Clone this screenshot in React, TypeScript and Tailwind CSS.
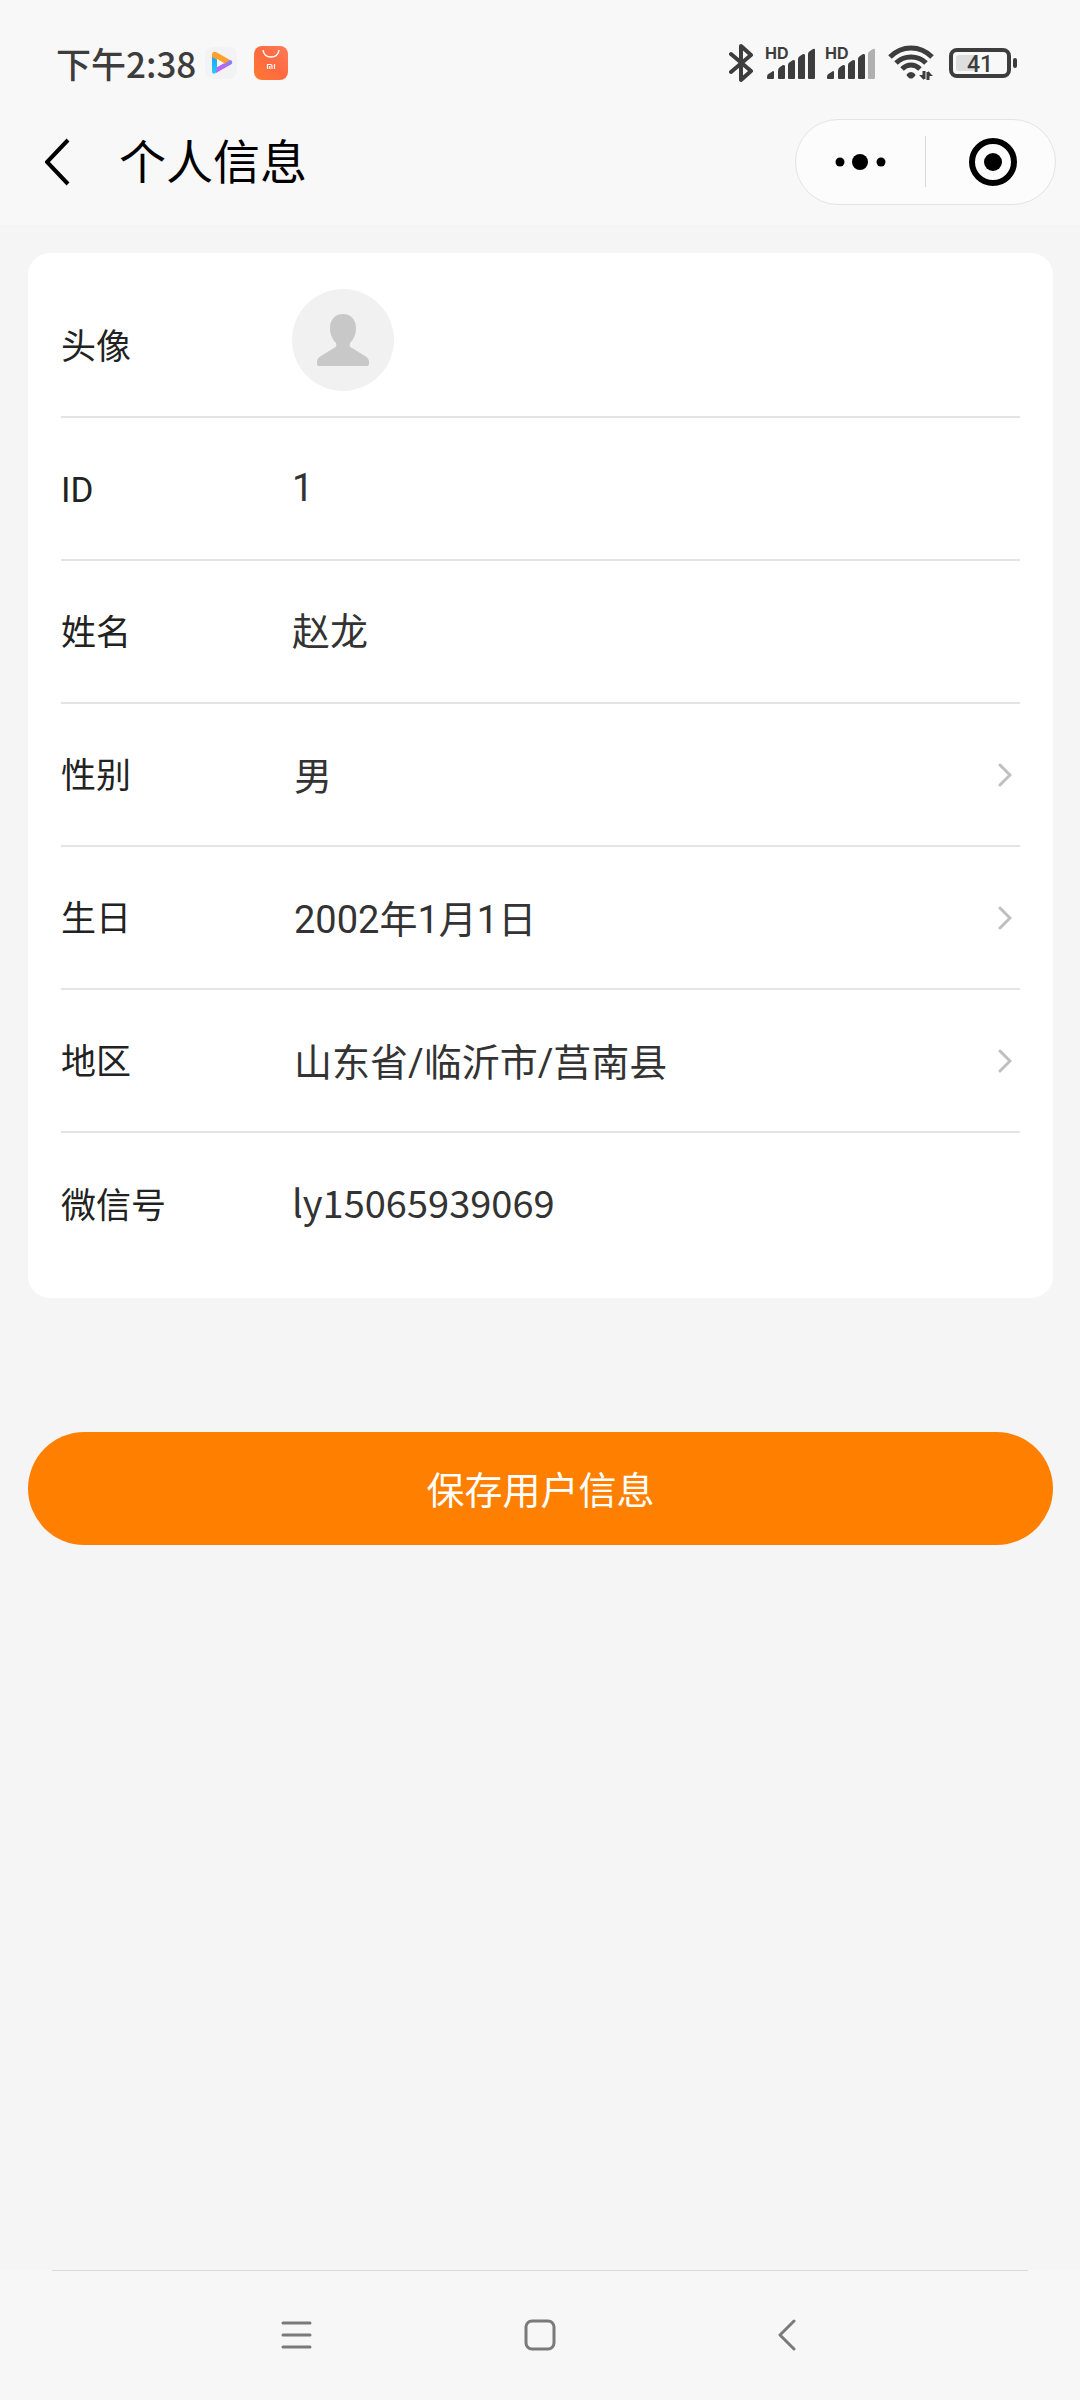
import { useState } from 'react';
import type { ReactNode } from 'react';

const regionText = '山东省/临沂市/莒南县';

function BluetoothIcon() {
    return (
        <svg width="26" height="40" viewBox="0 0 26 40" fill="none" stroke="#3d3d3d" strokeWidth="4" strokeLinecap="round" strokeLinejoin="round">
            <path d="M2 11 L22 28 L12 37 V3 L22 12 L2 29" />
        </svg>
    );
}

function SignalIcon({ weak }: { weak?: boolean }) {
    return (
        <svg width="51" height="42" viewBox="0 -4 51 42" fill="#3d3d3d">
            <text x="0" y="13" fontSize="16" fontWeight="700" fontFamily="Inter, sans-serif">HD</text>
            <path d="M3 33 Q2 33 2 32 V31 Q2 28 5 27 L8 25 Q9 25 9 26 V32 Q9 33 8 33 Z" />
            <path d="M13 25 Q13 22 15 21 L18 19 Q20 19 20 20 V32 Q20 33 19 33 H14 Q13 33 13 32 Z" />
            <path d="M23 19 Q23 17 25 16 L28 14 Q30 14 30 15 V32 Q30 33 29 33 H24 Q23 33 23 32 Z" />
            <path d="M33 13 Q33 11 35 10 L38 8 Q40 8 40 9 V32 Q40 33 39 33 H34 Q33 33 33 32 Z" />
            <path
                d="M43 8 Q43 6 45 5 L48 3 Q50 2 50 4 V32 Q50 33 49 33 H44 Q43 33 43 32 Z"
                fill={weak ? '#b0b0b0' : '#3d3d3d'}
            />
        </svg>
    );
}

function WifiIcon() {
    return (
        <svg width="46" height="36" viewBox="0 0 46 36" fill="none" stroke="#3d3d3d" strokeWidth="5">
            <path d="M2 12 Q11 3 23 3 Q35 3 44 12" />
            <path d="M8 18 Q14 12 23 12 Q32 12 38 18" />
            <path d="M14 24 Q18 20 23 20 Q28 20 32 24" />
            <path d="M19 29 Q23 25 27 29 Q28 30 27 31 L25 33 Q23 34 21 33 L19 31 Q18 30 19 29 Z" fill="#3d3d3d" stroke="none" />
            <path d="M36 26 V34 M40 35 V27" strokeWidth="3" />
            <path d="M31 30 H36 V35 Z M45 31 H40 V26 Z" fill="#3d3d3d" stroke="none" />
        </svg>
    );
}

function BatteryIcon() {
    return (
        <svg width="68" height="30" viewBox="0 0 68 30">
            <rect x="2" y="2" width="58" height="26" rx="6" fill="none" stroke="#3d3d3d" strokeWidth="4" />
            <rect x="7" y="7" width="20" height="16" rx="3" fill="#dedede" />
            <rect x="64" y="10" width="4" height="10" rx="2" fill="#3d3d3d" />
            <text x="31" y="24" textAnchor="middle" fontSize="23" fontWeight="500" fontFamily="Roboto, sans-serif" fill="#3d3d3d">41</text>
        </svg>
    );
}

function VideoAppIcon() {
    return (
        <svg width="34" height="34" viewBox="0 0 34 34" fill="none" strokeLinecap="round">
            <defs>
                <linearGradient id="play-left" x1="0" y1="0" x2="0" y2="1">
                    <stop offset="0" stopColor="#1f9dff" />
                    <stop offset="1" stopColor="#22cdf5" />
                </linearGradient>
                <linearGradient id="play-bottom" x1="0" y1="1" x2="1" y2="0">
                    <stop offset="0" stopColor="#cf5cf0" />
                    <stop offset="1" stopColor="#8f7bff" />
                </linearGradient>
            </defs>
            <rect x="1" y="1" width="32" height="32" rx="8" fill="#f3f3f5" />
            <path d="M8 8 H13 V26 Q8 30 8 25 Z" fill="url(#play-left)" />
            <path d="M12 27 L13 21 L22 16 L26 14 Q29 17 26 19 Z" fill="url(#play-bottom)" />
            <path d="M8 9 Q8 5 12 6 L26 14 L21 18 L8 11 Z" fill="#ffa02c" />
            <path d="M21 17 L27 14 Q30 17 26 19 Z" fill="#8f7bff" />
            <path d="M13 13 L20 17 L13 21 Z" fill="#f7f7f8" />
        </svg>
    );
}

function StoreAppIcon() {
    return (
        <svg width="34" height="34" viewBox="0 0 34 34" fill="none" stroke="#ffffff">
            <defs>
                <linearGradient id="store-bg" x1="0" y1="1" x2="1" y2="0">
                    <stop offset="0" stopColor="#ff7a30" />
                    <stop offset="0.5" stopColor="#ff6a41" />
                    <stop offset="1" stopColor="#ff7b57" />
                </linearGradient>
            </defs>
            <rect width="34" height="34" rx="8" fill="url(#store-bg)" stroke="none" />
            <path d="M9 4 Q10 11 17 11 Q24 11 25 4" strokeWidth="1.5" />
            <path d="M13.5 23 V18.5 H16.5 Q18 18.5 18 20 V23 M15.8 20 V23 M20.5 18 V23" strokeWidth="1.2" />
        </svg>
    );
}

function StatusBar() {
    return (
        <div className="flex h-[98px] items-center justify-between pt-7 pr-[63px] pl-14">
            <div className="flex items-center">
                <span className="mr-2 pb-[2px] text-[35px] leading-none font-medium text-[#3d3d3d]">下午2:38</span>
                <div className="flex items-center gap-4">
                    <VideoAppIcon />
                    <StoreAppIcon />
                </div>
            </div>
            <div className="flex items-center">
                <BluetoothIcon />
                <div className="mr-3 ml-[10px] flex items-center gap-[9px]">
                    <SignalIcon />
                    <SignalIcon weak />
                </div>
                <WifiIcon />
                <div className="ml-[15px]">
                    <BatteryIcon />
                </div>
            </div>
        </div>
    );
}

function TitleBar() {
    return (
        <header className="flex h-[127px] items-center pr-6 pl-[45px]">
            <button type="button" aria-label="返回" className="mr-12">
                <svg width="26" height="48" viewBox="0 0 26 48" fill="none" stroke="#000" strokeWidth="4">
                    <path d="M23 2 L2 24 L23 46" />
                </svg>
            </button>
            <h1 className="flex-1 pb-[6px] text-[47px] leading-none text-black">个人信息</h1>
            <div className="flex h-[86px] w-[261px] items-center rounded-full border border-[#e4e4e4] bg-[#fcfcfc]">
                <button type="button" aria-label="更多" className="flex w-[129px] justify-center">
                    <svg width="52" height="18" viewBox="0 0 52 18">
                        <circle cx="5" cy="9" r="4.5" />
                        <circle cx="25" cy="9" r="8" />
                        <circle cx="46" cy="9" r="4.5" />
                    </svg>
                </button>
                <div className="h-[51px] w-px bg-[#d8d8d8]" />
                <button type="button" aria-label="关闭" className="flex flex-1 justify-center pl-1">
                    <svg width="48" height="48" viewBox="0 0 48 48">
                        <circle cx="24" cy="24" r="21" fill="none" stroke="#000" strokeWidth="6" />
                        <circle cx="24" cy="24" r="9" />
                    </svg>
                </button>
            </div>
        </header>
    );
}

function Arrow() {
    return (
        <svg className="mr-2 shrink-0" width="14" height="24" viewBox="0 0 14 24" fill="none" stroke="#bfbfbf" strokeWidth="3" strokeLinecap="round">
            <path d="M2 2 L12 12 L2 22" />
        </svg>
    );
}

function Row({ label, htmlFor, children }: { label: string; htmlFor?: string; children: ReactNode }) {
    return (
        <div className="flex h-[143px] items-center border-b-2 border-[#e4e4e4] last:border-b-0">
            <label htmlFor={htmlFor} className="w-[231px] shrink-0 pt-[6px] text-[35px] text-[#222]">{label}</label>
            <div className="flex min-w-0 flex-1 items-center text-[38px] text-[#333]">{children}</div>
        </div>
    );
}

function TextInput({ id, value, onChange }: { id: string; value: string; onChange: (value: string) => void }) {
    return (
        <input
            id={id}
            type="text"
            value={value}
            onChange={(e) => onChange(e.target.value)}
            className="w-full pb-[6px] font-['Noto_Sans_CJK_SC',sans-serif] outline-none"
        />
    );
}

function PickerButton({ id, value }: { id: string; value: string }) {
    return (
        <button id={id} type="button" className="flex flex-1 items-center justify-between pl-[2px]">
            <span className="pt-[6px]">{value}</span>
            <Arrow />
        </button>
    );
}

function Avatar() {
    return (
        <button type="button" id="avatar" aria-label="更换头像" className="mb-3">
            <svg width="102" height="102" viewBox="0 0 102 102">
                <circle cx="51" cy="51" r="51" fill="#f1f1f1" />
                <path
                    d="M51 25 C59 25 64 31 64 39 C64 46 61 51 58 54 C57 57 58 58 60 59 L73 67 Q77 69 77 73 V75 Q77 77 75 77 H27 Q25 77 25 75 V73 Q25 69 29 67 L42 59 C44 58 45 57 44 54 C41 51 38 46 38 39 C38 31 43 25 51 25 Z"
                    fill="#c8c8c8"
                />
            </svg>
        </button>
    );
}

function SystemNav() {
    return (
        <nav className="bg-[#f7f7f7]">
            <div className="mx-[52px] h-px bg-[#dcdcdc]" />
            <div className="mx-auto grid h-[129px] w-[735px] grid-cols-3 items-center justify-items-center pb-[2px]">
                <button type="button" aria-label="最近任务">
                    <svg width="34" height="32" viewBox="0 0 34 32" stroke="#7a7a7a" strokeWidth="3" strokeLinecap="round">
                        <path d="M5 4 H32 M5 16 H32 M5 28 H32" />
                    </svg>
                </button>
                <button type="button" aria-label="主屏幕">
                    <svg width="32" height="32" viewBox="0 0 32 32" fill="none" stroke="#7a7a7a" strokeWidth="3">
                        <rect x="2" y="2" width="28" height="28" rx="6" />
                    </svg>
                </button>
                <button type="button" aria-label="返回上一页">
                    <svg width="22" height="32" viewBox="0 0 22 32" fill="none" stroke="#7a7a7a" strokeWidth="3" strokeLinecap="round" strokeLinejoin="round">
                        <path d="M20 2 L6 16 L20 30" />
                    </svg>
                </button>
            </div>
        </nav>
    );
}

export default function App() {
    const [name, setName] = useState('赵龙');
    const [gender, setGender] = useState('男');
    const [wechat, setWechat] = useState('ly15065939069');

    return (
        <div className="flex min-h-screen flex-col bg-[#f5f5f5] font-[Roboto,'Noto_Sans_CJK_SC',sans-serif]">
            <div className="bg-[#f8f8f8] font-['Noto_Sans_CJK_SC',sans-serif]">
                <StatusBar />
                <TitleBar />
            </div>

            <main className="flex-1 pt-7 pr-[27px] pl-7">
                <form onSubmit={(e) => e.preventDefault()}>
                    <div className="rounded-[22px] bg-white px-[33px] py-[22px]">
                        <Row label="头像" htmlFor="avatar">
                            <Avatar />
                        </Row>
                        <Row label="ID">
                            <span>1</span>
                        </Row>
                        <Row label="姓名" htmlFor="name">
                            <TextInput id="name" value={name} onChange={setName} />
                        </Row>
                        <Row label="性别" htmlFor="gender">
                            <select
                                id="gender"
                                value={gender}
                                onChange={(e) => setGender(e.target.value)}
                                className="flex-1 appearance-none pt-[6px] pl-[2px] outline-none"
                            >
                                <option value="男">男</option>
                                <option value="女">女</option>
                            </select>
                            <Arrow />
                        </Row>
                        <Row label="生日" htmlFor="birthday">
                            <PickerButton id="birthday" value="2002年1月1日" />
                        </Row>
                        <Row label="地区" htmlFor="region">
                            <PickerButton id="region" value={regionText} />
                        </Row>
                        <Row label="微信号" htmlFor="wechat">
                            <TextInput id="wechat" value={wechat} onChange={setWechat} />
                        </Row>
                    </div>

                    <button type="submit" className="mt-[134px] h-[113px] w-full rounded-full bg-[#ff8000] pt-[6px] text-[38px] text-white">
                        保存用户信息
                    </button>
                </form>
            </main>

            <SystemNav />
        </div>
    );
}
